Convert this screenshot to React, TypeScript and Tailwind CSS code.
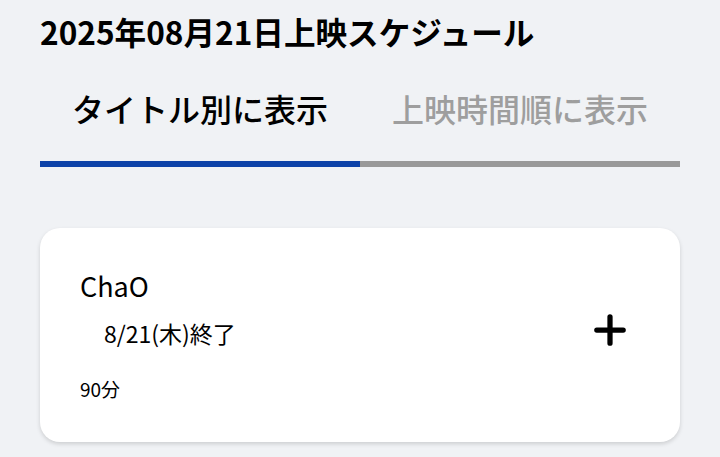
import React from "react";

export default function App() {
  return (
    <div
      className="min-h-[457px] w-[720px] bg-[#f0f2f5] px-10 pt-[11px] text-black"
      style={{ fontFamily: '"Noto Sans CJK JP", "Noto Sans", sans-serif' }}
    >
      <h1 className="text-[31.6px] font-bold leading-[40px]">2025年08月21日上映スケジュール</h1>
      <div className="mt-[35px] grid grid-cols-2">
        <button className="border-b-[6px] border-[#0d42a8] pb-[31px] text-[32px] font-medium leading-[44px] text-black">
          タイトル別に表示
        </button>
        <button className="border-b-[6px] border-[#999999] pb-[31px] text-[32px] font-medium leading-[44px] text-[#9e9e9e]">
          上映時間順に表示
        </button>
      </div>
      <div className="mt-[61px] flex items-center rounded-[20px] bg-white pb-[40px] pl-10 pr-[52px] pt-[40px] shadow-[0_2px_4px_rgba(0,0,0,0.15)]">
        <div className="flex-1">
          <div className="text-[27px] leading-[36px]">ChaO</div>
          <div className="mt-[13px] pl-6 text-[23px] leading-[32px]">8/21(木)終了</div>
          <div className="mt-[27px] text-[19px] leading-[26px]">90分</div>
        </div>
        <svg className="mb-[10px]" width="36" height="36" viewBox="0 0 24 24" fill="none" stroke="black" strokeWidth="3.5" strokeLinecap="round">
          <path d="M12 3.2v17.6M3.2 12h17.6" />
        </svg>
      </div>
    </div>
  );
}
